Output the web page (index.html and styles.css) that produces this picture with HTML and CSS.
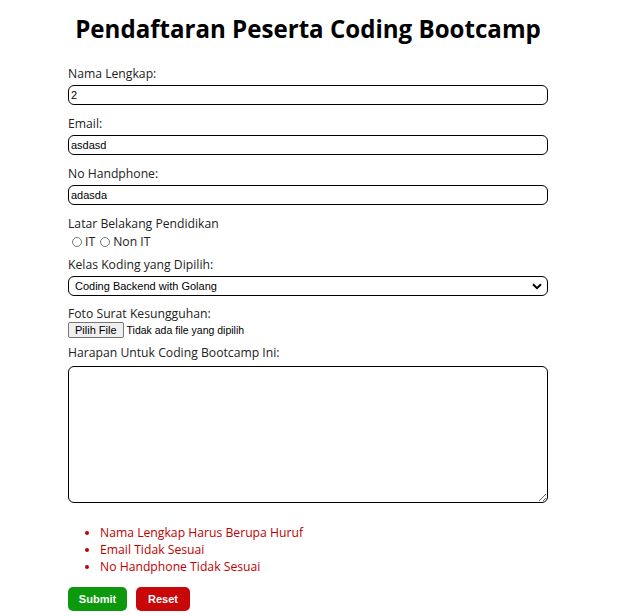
FILE: index.html
```html
<!DOCTYPE html>
<html lang="id">
<head>
<meta charset="utf-8">
<title>Pendaftaran Peserta Coding Bootcamp</title>
<link rel="stylesheet" href="styles.css">
</head>
<body>
<div class="container">
  <h1 class="title">Pendaftaran Peserta Coding Bootcamp</h1>
  <form class="form">
    <div class="group">
      <label class="label" for="nama">Nama Lengkap:</label>
      <input class="field" id="nama" type="text" value="2">
    </div>
    <div class="group">
      <label class="label" for="email">Email:</label>
      <input class="field" id="email" type="text" value="asdasd">
    </div>
    <div class="group">
      <label class="label" for="hp">No Handphone:</label>
      <input class="field" id="hp" type="text" value="adasda">
    </div>
    <div class="group group-radio">
      <span class="label label-flush">Latar Belakang Pendidikan</span>
      <div class="radios">
        <label class="radio"><input type="radio" name="lb" class="radio-input">IT</label>
        <label class="radio"><input type="radio" name="lb" class="radio-input">Non IT</label>
      </div>
    </div>
    <div class="group">
      <label class="label" for="kelas">Kelas Koding yang Dipilih:</label>
      <div class="select-wrap">
        <select class="field select" id="kelas">
          <option>Coding Backend with Golang</option>
        </select>
        <svg class="chev" width="10" height="7" viewBox="0 0 10 7"><path d="M1 1.2 L5 5.2 L9 1.2" fill="none" stroke="#000" stroke-width="2"/></svg>
      </div>
    </div>
    <div class="group group-file">
      <span class="label label-tight">Foto Surat Kesungguhan:</span>
      <div class="file-row">
        <span class="file-btn">Pilih File</span>
        <span class="file-text">Tidak ada file yang dipilih</span>
      </div>
    </div>
    <div class="group">
      <label class="label label-area" for="harapan">Harapan Untuk Coding Bootcamp Ini:</label>
      <textarea class="area" id="harapan"></textarea>
    </div>
    <ul class="errors">
      <li>Nama Lengkap Harus Berupa Huruf</li>
      <li>Email Tidak Sesuai</li>
      <li>No Handphone Tidak Sesuai</li>
    </ul>
    <div class="actions">
      <button type="button" class="btn btn-submit">Submit</button>
      <button type="button" class="btn btn-reset">Reset</button>
    </div>
  </form>
</div>
</body>
</html>
```

FILE: styles.css
```css
html, body {
  margin: 0;
  padding: 0;
  background: #fff;
}
body {
  font-family: "Open Sans", "Noto Sans", sans-serif;
  color: #222;
}
.container {
  width: 480px;
  margin-left: 68px;
}
.title {
  margin: 12px -40px 0;
  font-size: 24.1px;
  line-height: 34px;
  font-weight: 700;
  text-align: center;
  white-space: nowrap;
  color: #000;
}
.form {
  margin-top: 19px;
  display: flex;
  flex-direction: column;
}
.group {
  display: flex;
  flex-direction: column;
  margin-bottom: 10px;
}
.group-radio {
  margin-bottom: 8px;
}
.group-file {
  margin-bottom: 6px;
}
.label {
  font-size: 12.2px;
  line-height: 18px;
  margin-bottom: 2px;
  color: #222;
}
.label-flush {
  margin-bottom: 0;
}
.label-tight {
  line-height: 16px;
  margin-bottom: 0;
}
.label-area {
  margin-bottom: 4px;
}
.field {
  display: block;
  box-sizing: border-box;
  width: 480px;
  height: 20px;
  margin: 0;
  padding: 0 2px;
  border: 1px solid #000;
  border-radius: 6px;
  font-family: "Liberation Sans", Arial, sans-serif;
  font-size: 11px;
  color: #000;
  background: #fff;
  outline: none;
}
.radios {
  display: flex;
  align-items: center;
  height: 13px;
  margin-top: 2px;
  font-size: 12.2px;
}
.radio {
  display: flex;
  align-items: center;
  margin-right: 1px;
}
.radio-input {
  width: 10px;
  height: 10px;
  margin: 0 3px 0 4px;
}
.select-wrap {
  position: relative;
  width: 480px;
}
.select {
  appearance: none;
  -webkit-appearance: none;
  padding-left: 6px;
}
.chev {
  position: absolute;
  right: 6px;
  top: 7px;
  pointer-events: none;
}
.file-row {
  display: flex;
  align-items: center;
  height: 16px;
  font-family: "Liberation Sans", Arial, sans-serif;
  font-size: 11px;
  color: #000;
}
.file-btn {
  box-sizing: border-box;
  height: 16px;
  padding: 0 6px;
  line-height: 14px;
  border: 1px solid #767676;
  border-radius: 2px;
  background: #efefef;
  margin-right: 3px;
}
.file-text {
  font-size: 10.5px;
}
.area {
  display: block;
  box-sizing: border-box;
  width: 480px;
  height: 137px;
  margin: 0;
  border: 1px solid #000;
  border-radius: 6px;
  resize: both;
}
.errors {
  margin: 11px 0 0;
  padding-left: 32px;
  font-size: 12.2px;
  line-height: 17px;
  color: #c00000;
}
.actions {
  display: flex;
  gap: 9px;
  margin-top: 12px;
}
.btn {
  height: 24px;
  border: none;
  border-radius: 5px;
  padding: 0;
  font-family: "Liberation Sans", Arial, sans-serif;
  font-size: 11px;
  font-weight: 700;
  color: #fff;
}
.btn-submit {
  background: #0c9a0c;
  width: 59px;
}
.btn-reset {
  background: #c80808;
  width: 54px;
}
```
